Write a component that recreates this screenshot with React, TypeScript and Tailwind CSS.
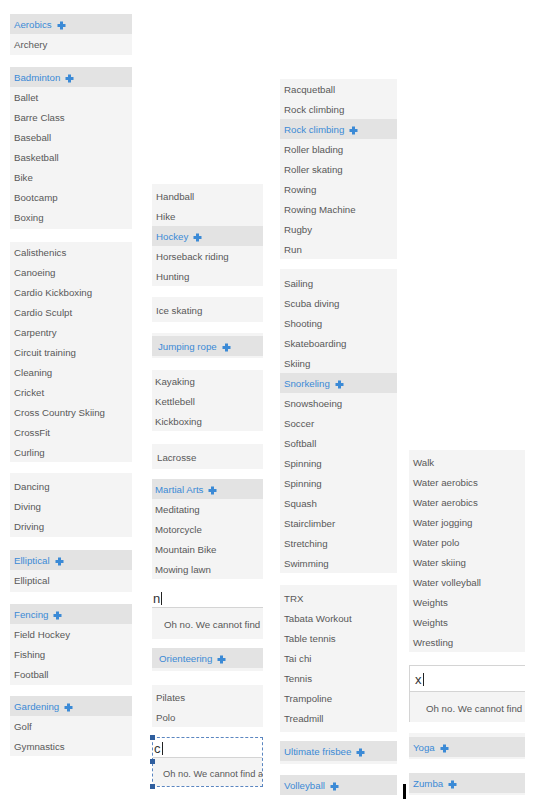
import React from 'react';

type Row = { label: string; head?: boolean };
type Group = { cls: string; pad?: string; rows: Row[] };

const h = (label: string): Row => ({ label, head: true });
const r = (...labels: string[]): Row[] => labels.map((label) => ({ label }));

function Plus() {
    return (
        <svg width="9" height="9" viewBox="0 0 9 9" className="ml-[5px] shrink-0">
            <path d="M3 0.5h3v2.5h2.5v3H6v2.5H3V6H0.5V3H3z" fill="#3b8ad6" />
        </svg>
    );
}

function ListGroup({ cls, pad = 'pl-[4px]', rows }: Group) {
    return (
        <div className={`bg-[#f4f4f4] ${cls}`}>
            {rows.map((row, i) =>
                row.head ? (
                    <div key={i} className={`flex h-[20px] items-center bg-[#e3e3e3] pt-[2px] text-[#3b8ad6] ${pad}`}>
                        {row.label}
                        <Plus />
                    </div>
                ) : (
                    <div key={i} className={`flex h-[20px] items-center pt-[2px] ${pad}`}>
                        {row.label}
                    </div>
                ),
            )}
        </div>
    );
}

function Caret() {
    return <span className="ml-[1px] inline-block h-[13px] w-[1px] bg-[#222]" />;
}

const column1: Group[] = [
    { cls: 'mt-[14px] pb-[1px]', rows: [h('Aerobics'), ...r('Archery')] },
    {
        cls: 'mt-[12px] pb-[2px]',
        rows: [h('Badminton'), ...r('Ballet', 'Barre Class', 'Baseball', 'Basketball', 'Bike', 'Bootcamp', 'Boxing')],
    },
    {
        cls: 'mt-[13px]',
        rows: r(
            'Calisthenics',
            'Canoeing',
            'Cardio Kickboxing',
            'Cardio Sculpt',
            'Carpentry',
            'Circuit training',
            'Cleaning',
            'Cricket',
            'Cross Country Skiing',
            'CrossFit',
            'Curling',
        ),
    },
    { cls: 'mt-[11px] pt-[3px] pb-[1px]', rows: r('Dancing', 'Diving', 'Driving') },
    { cls: 'mt-[13px] pb-[2px]', rows: [h('Elliptical'), ...r('Elliptical')] },
    { cls: 'mt-[12px] pb-[1px]', rows: [h('Fencing'), ...r('Field Hockey', 'Fishing', 'Football')] },
    { cls: 'mt-[11px]', rows: [h('Gardening'), ...r('Golf', 'Gymnastics')] },
];

const column3: Group[] = [
    {
        cls: 'mt-[79px]',
        rows: [
            ...r('Racquetball', 'Rock climbing'),
            h('Rock climbing'),
            ...r('Roller blading', 'Roller skating', 'Rowing', 'Rowing Machine', 'Rugby', 'Run'),
        ],
    },
    {
        cls: 'mt-[10px] pt-[4px]',
        rows: [
            ...r('Sailing', 'Scuba diving', 'Shooting', 'Skateboarding', 'Skiing'),
            h('Snorkeling'),
            ...r(
                'Snowshoeing',
                'Soccer',
                'Softball',
                'Spinning',
                'Spinning',
                'Squash',
                'Stairclimber',
                'Stretching',
                'Swimming',
            ),
        ],
    },
    {
        cls: 'mt-[12px] pt-[3px] pb-[4px]',
        rows: r('TRX', 'Tabata Workout', 'Table tennis', 'Tai chi', 'Tennis', 'Trampoline', 'Treadmill'),
    },
    { cls: 'mt-[9px] pb-[3px]', rows: [h('Ultimate frisbee')] },
    { cls: 'mt-[11px]', rows: [h('Volleyball')] },
];

export default function App() {
    return (
        <div className="flex h-[808px] w-[550px] items-start overflow-hidden bg-white pl-[10px] font-['Liberation_Sans',Arial,sans-serif] text-[9.7px] text-[#585858]">
            {/* column A–G */}
            <div className="flex w-[122px] shrink-0 flex-col">
                {column1.map((g, i) => (
                    <ListGroup key={i} {...g} />
                ))}
            </div>

            {/* column H–Q */}
            <div className="ml-[20px] flex w-[111px] shrink-0 flex-col">
                <ListGroup
                    cls="mt-[184px] pt-[2px]"
                    rows={[...r('Handball', 'Hike'), h('Hockey'), ...r('Horseback riding', 'Hunting')]}
                />
                <ListGroup cls="mt-[11px] pt-[3px] pb-[2px]" rows={r('Ice skating')} />
                <ListGroup cls="mt-[11px] pt-[3px] pb-[2px]" pad="pl-[6px]" rows={[h('Jumping rope')]} />
                <ListGroup cls="mt-[12px] pt-[1px]" pad="pl-[3px]" rows={r('Kayaking', 'Kettlebell', 'Kickboxing')} />
                <ListGroup cls="mt-[13px] pt-[3px] pb-[2px]" pad="pl-[5px]" rows={r('Lacrosse')} />
                <ListGroup
                    cls="mt-[10px]"
                    pad="pl-[3px]"
                    rows={[h('Martial Arts'), ...r('Meditating', 'Motorcycle', 'Mountain Bike', 'Mowing lawn')]}
                />

                <div className="mt-[9px]">
                    <div className="flex h-[20px] items-center border-b border-[#d4d4d4] bg-white pl-[1px] pt-[2px] text-[13px] text-[#333]">
                        n<Caret />
                    </div>
                    <div className="flex h-[31px] items-center overflow-hidden whitespace-nowrap bg-[#f4f4f4] pl-[12px] pt-[4px]">
                        Oh no. We cannot find
                    </div>
                </div>

                <ListGroup cls="mt-[9px] pb-[3px]" pad="pl-[7px]" rows={[h('Orienteering')]} />
                <ListGroup cls="mt-[14px] pt-[2px]" rows={r('Pilates', 'Polo')} />

                <div className="relative mt-[10px] border border-dashed border-[#5b86c0]">
                    <div className="flex h-[20px] items-center border-b border-[#d4d4d4] bg-white pl-[1px] pt-[2px] text-[13px] text-[#333]">
                        c<Caret />
                    </div>
                    <div className="flex h-[28px] items-center overflow-hidden whitespace-nowrap bg-[#f4f4f4] pl-[10px] pt-[6px] text-[9.3px]">
                        Oh no. We cannot find a
                    </div>
                    <span className="absolute left-[-3px] top-[-3px] h-[5px] w-[5px] bg-[#2f5e9e]" />
                    <span className="absolute left-[-3px] top-[21px] h-[5px] w-[5px] bg-[#2f5e9e]" />
                    <span className="absolute bottom-[-3px] left-[-3px] h-[5px] w-[5px] bg-[#2f5e9e]" />
                </div>
            </div>

            {/* column R–V */}
            <div className="ml-[17px] flex w-[117px] shrink-0 flex-col">
                {column3.map((g, i) => (
                    <ListGroup key={i} {...g} />
                ))}
            </div>

            {/* stray text cursor */}
            <div className="w-[12px] shrink-0">
                <div className="ml-[6px] mt-[784px] h-[15px] w-[3px] bg-black" />
            </div>

            {/* column W–Z */}
            <div className="flex w-[116px] shrink-0 flex-col">
                <ListGroup
                    cls="mt-[450px] pt-[2px]"
                    rows={r(
                        'Walk',
                        'Water aerobics',
                        'Water aerobics',
                        'Water jogging',
                        'Water polo',
                        'Water skiing',
                        'Water volleyball',
                        'Weights',
                        'Weights',
                        'Wrestling',
                    )}
                />

                <div className="mt-[13px] border-l border-t border-[#d4d4d4]">
                    <div className="flex h-[26px] items-center border-b border-[#d4d4d4] bg-white pl-[5px] pt-[2px] text-[13px] text-[#333]">
                        x<Caret />
                    </div>
                    <div className="flex h-[30px] items-center overflow-hidden whitespace-nowrap bg-[#f4f4f4] pl-[16px] pt-[4px]">
                        Oh no. We cannot find
                    </div>
                </div>

                <ListGroup cls="mt-[11px] pt-[4px] pb-[2px]" rows={[h('Yoga')]} />
                <ListGroup cls="mt-[14px] pb-[2px]" rows={[h('Zumba')]} />
            </div>
        </div>
    );
}
